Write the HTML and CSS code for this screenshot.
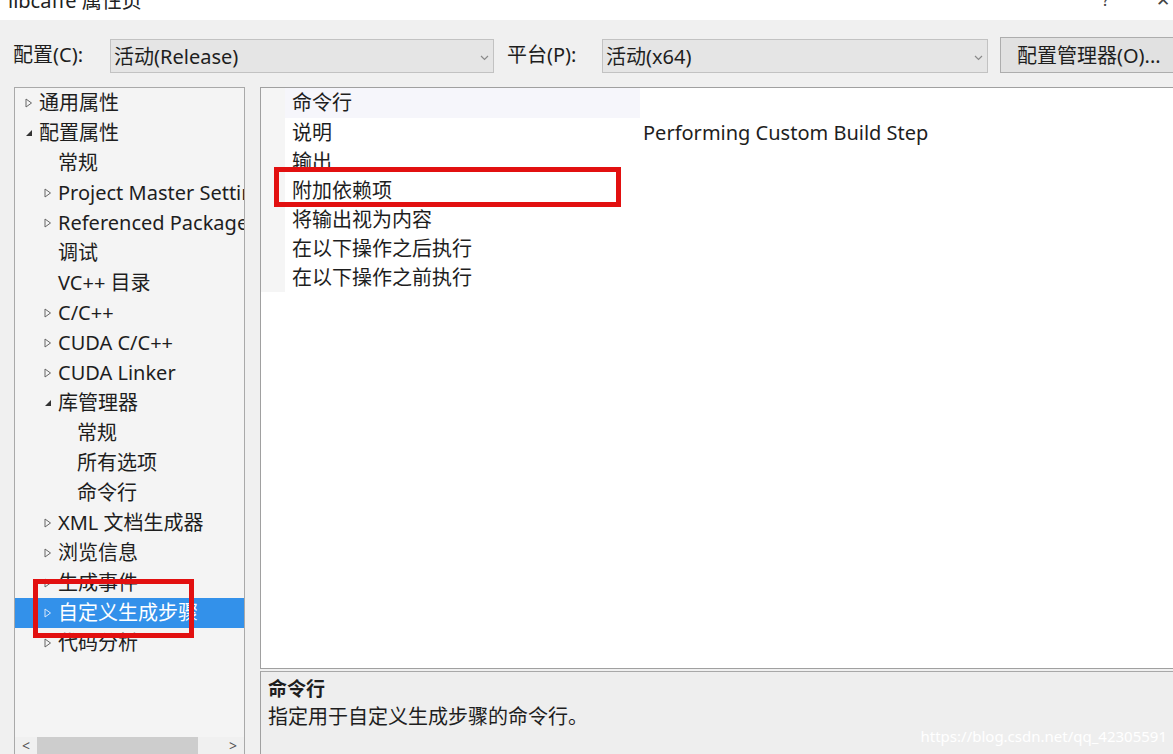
FILE: index.html
```html
<!DOCTYPE html>
<html lang="zh-CN">
<head>
    <meta charset="UTF-8">
    <title>libcaffe 属性页</title>
    <link rel="stylesheet" href="styles.css">
</head>
<body>

<div class="titlebar">
    <span class="title">libcaffe 属性页</span>
    <span class="help">?</span>
    <span class="close">✕</span>
</div>

<div class="toolbar">
    <span class="lbl lbl-config">配置(C):</span>
    <div class="combo combo-config">
        <span>活动(Release)</span>
        <svg class="chev" width="9" height="6" viewBox="0 0 9 6"><path d="M1 1 L4.5 4.5 L8 1" fill="none" stroke="#8a8a8a" stroke-width="1.2"/></svg>
    </div>
    <span class="lbl lbl-platform">平台(P):</span>
    <div class="combo combo-platform">
        <span>活动(x64)</span>
        <svg class="chev" width="9" height="6" viewBox="0 0 9 6"><path d="M1 1 L4.5 4.5 L8 1" fill="none" stroke="#8a8a8a" stroke-width="1.2"/></svg>
    </div>
    <button class="btn-manager">配置管理器(O)...</button>
</div>

<div class="main">
    <div class="tree">
        <div class="tree-items">
            <div class="node lv0"><span class="tw"><svg width="8" height="10" viewBox="0 0 8 10"><path d="M1 1 L6.5 5 L1 9 Z" fill="none" stroke="#666" stroke-width="1"/></svg></span>通用属性</div>
            <div class="node lv0"><span class="tw"><svg width="8" height="10" viewBox="0 0 8 10"><path d="M7 2 L7 8 L1 8 Z" fill="#333"/></svg></span>配置属性</div>
            <div class="node lv1"><span class="tw"></span>常规</div>
            <div class="node lv1"><span class="tw"><svg width="8" height="10" viewBox="0 0 8 10"><path d="M1 1 L6.5 5 L1 9 Z" fill="none" stroke="#666" stroke-width="1"/></svg></span>Project Master Settings</div>
            <div class="node lv1"><span class="tw"><svg width="8" height="10" viewBox="0 0 8 10"><path d="M1 1 L6.5 5 L1 9 Z" fill="none" stroke="#666" stroke-width="1"/></svg></span>Referenced Packages</div>
            <div class="node lv1"><span class="tw"></span>调试</div>
            <div class="node lv1"><span class="tw"></span>VC++ 目录</div>
            <div class="node lv1"><span class="tw"><svg width="8" height="10" viewBox="0 0 8 10"><path d="M1 1 L6.5 5 L1 9 Z" fill="none" stroke="#666" stroke-width="1"/></svg></span>C/C++</div>
            <div class="node lv1"><span class="tw"><svg width="8" height="10" viewBox="0 0 8 10"><path d="M1 1 L6.5 5 L1 9 Z" fill="none" stroke="#666" stroke-width="1"/></svg></span>CUDA C/C++</div>
            <div class="node lv1"><span class="tw"><svg width="8" height="10" viewBox="0 0 8 10"><path d="M1 1 L6.5 5 L1 9 Z" fill="none" stroke="#666" stroke-width="1"/></svg></span>CUDA Linker</div>
            <div class="node lv1"><span class="tw"><svg width="8" height="10" viewBox="0 0 8 10"><path d="M7 2 L7 8 L1 8 Z" fill="#333"/></svg></span>库管理器</div>
            <div class="node lv2"><span class="tw"></span>常规</div>
            <div class="node lv2"><span class="tw"></span>所有选项</div>
            <div class="node lv2"><span class="tw"></span>命令行</div>
            <div class="node lv1"><span class="tw"><svg width="8" height="10" viewBox="0 0 8 10"><path d="M1 1 L6.5 5 L1 9 Z" fill="none" stroke="#666" stroke-width="1"/></svg></span>XML 文档生成器</div>
            <div class="node lv1"><span class="tw"><svg width="8" height="10" viewBox="0 0 8 10"><path d="M1 1 L6.5 5 L1 9 Z" fill="none" stroke="#666" stroke-width="1"/></svg></span>浏览信息</div>
            <div class="node lv1"><span class="tw"><svg width="8" height="10" viewBox="0 0 8 10"><path d="M1 1 L6.5 5 L1 9 Z" fill="none" stroke="#666" stroke-width="1"/></svg></span>生成事件</div>
            <div class="node lv1 selected"><span class="tw"><svg width="8" height="10" viewBox="0 0 8 10"><path d="M1 1 L6.5 5 L1 9 Z" fill="none" stroke="#dbe9fb" stroke-width="1"/></svg></span>自定义生成步骤</div>
            <div class="node lv1"><span class="tw"><svg width="8" height="10" viewBox="0 0 8 10"><path d="M1 1 L6.5 5 L1 9 Z" fill="none" stroke="#666" stroke-width="1"/></svg></span>代码分析</div>
        </div>
        <div class="hscroll">
            <span class="arr">&lt;</span>
            <div class="track"><div class="thumb"></div></div>
            <span class="arr">&gt;</span>
        </div>
        <!-- красная рамка поверх дерева -->
        <div class="mark mark-tree"></div>
    </div>

    <div class="right">
        <div class="grid">
            <div class="prop current"><span class="gutter"></span><span class="name">命令行</span><span class="value"></span></div>
            <div class="prop"><span class="gutter"></span><span class="name">说明</span><span class="value">Performing Custom Build Step</span></div>
            <div class="prop"><span class="gutter"></span><span class="name">输出</span><span class="value"></span></div>
            <div class="prop"><span class="gutter"></span><span class="name">附加依赖项</span><span class="value"></span></div>
            <div class="prop"><span class="gutter"></span><span class="name">将输出视为内容</span><span class="value"></span></div>
            <div class="prop"><span class="gutter"></span><span class="name">在以下操作之后执行</span><span class="value"></span></div>
            <div class="prop"><span class="gutter"></span><span class="name">在以下操作之前执行</span><span class="value"></span></div>
            <div class="mark mark-grid"></div>
        </div>
        <div class="desc">
            <div class="desc-title">命令行</div>
            <div class="desc-text">指定用于自定义生成步骤的命令行。</div>
            <span class="watermark">https://blog.csdn.net/qq_42305591</span>
        </div>
    </div>
</div>

</body>
</html>
```

FILE: styles.css
```css
body {
    margin: 0;
    width: 1173px;
    height: 754px;
    overflow: hidden;
    background-color: #f0f0f0;
    color: #1e1e1e;
    font-family: "Noto Sans", "Noto Sans CJK SC", sans-serif;
    font-size: 20px;
}
.titlebar {
    height: 20px;
    background-color: #fff;
    position: relative;
    overflow: hidden;
}
.title {
    display: block;
    margin-top: -13px;
    padding-left: 8px;
    line-height: 28px;
    color: #222;
}
.help, .close {
    position: absolute;
    top: -12px;
    font-size: 17px;
    color: #444;
}
.help {
    left: 1102px;
}
.close {
    left: 1156px;
}
.toolbar {
    height: 67px;
    display: flex;
    align-items: center;
    padding-left: 13px;
    white-space: nowrap;
}
.toolbar > * {
    flex-shrink: 0;
}
.lbl-config {
    width: 97px;
}
.lbl-platform {
    margin-left: 13px;
    width: 95px;
}
.combo {
    height: 34px;
    margin-top: 5px;
    box-sizing: border-box;
    background-color: #e5e5e5;
    border: 1px solid #c2c2c2;
    display: flex;
    align-items: center;
    justify-content: space-between;
    padding: 0 4px 0 3px;
}
.combo-config {
    width: 384px;
}
.combo-platform {
    width: 386px;
}
.combo span {
    line-height: 32px;
    padding-top: 2px;
}
.chev {
    margin-top: 3px;
}
.btn-manager {
    margin-left: 12px;
    height: 36px;
    margin-top: 2px;
    width: 190px;
    text-align: left;
    padding: 0 0 0 16px;
    background-color: #e1e1e1;
    border: 1px solid #adadad;
    font-family: inherit;
    font-size: 20px;
    color: #1e1e1e;
}
.main {
    display: flex;
    height: 667px;
}
.tree {
    margin-left: 14px;
    width: 231px;
    box-sizing: border-box;
    border: 1px solid #a9a9a9;
    border-bottom: none;
    background-color: #f4f4f4;
    display: flex;
    flex-direction: column;
    position: relative;
}
.tree-items {
    flex: 1;
    overflow: hidden;
}
.node {
    height: 30px;
    line-height: 30px;
    display: flex;
    align-items: center;
    white-space: nowrap;
}
.node.lv0 {
    padding-left: 10px;
}
.node.lv1 {
    padding-left: 29px;
}
.node.lv2 {
    padding-left: 48px;
}
.tw {
    width: 14px;
    flex-shrink: 0;
    display: flex;
    align-items: center;
}
.node.selected {
    background-color: #3391ea;
    color: #fff;
}
.hscroll {
    height: 17px;
    display: flex;
    align-items: center;
    background-color: #f0f0f0;
    font-size: 14px;
    color: #555;
}
.arr {
    width: 22px;
    text-align: center;
}
.track {
    flex: 1;
    height: 17px;
}
.thumb {
    width: 161px;
    height: 17px;
    background-color: #cdcdcd;
}
.right {
    margin-left: 15px;
    flex: 1;
    display: flex;
    flex-direction: column;
}
.grid {
    flex: 1;
    background-color: #fff;
    border-top: 1px solid #a0a0a0;
    border-left: 1px solid #a0a0a0;
    border-bottom: 1px solid #a0a0a0;
    position: relative;
}
.prop {
    display: flex;
    height: 29px;
    line-height: 29px;
}
.prop:first-child {
    height: 30px;
    line-height: 30px;
}
.gutter {
    width: 24px;
    background-color: #f5f5f5;
}
.name {
    width: 348px;
    padding-left: 7px;
    white-space: nowrap;
}
.prop.current .name {
    background-color: #f6f6fb;
}
.value {
    padding-left: 3px;
    white-space: nowrap;
}
.desc {
    height: 83px;
    margin-top: 2px;
    box-sizing: border-box;
    border-top: 1px solid #a8a8a8;
    border-left: 1px solid #a0a0a0;
    background-color: #eeeeee;
    padding: 3px 0 0 7px;
    position: relative;
}
.desc-title {
    font-weight: bold;
    font-size: 19px;
    line-height: 28px;
}
.desc-text {
    line-height: 28px;
}
.watermark {
    position: absolute;
    right: 6px;
    bottom: 8px;
    font-size: 15px;
    color: #ffffff;
}
.mark {
    position: absolute;
    border: 5px solid #e21010;
    box-sizing: border-box;
    pointer-events: none;
}
.mark-tree {
    left: 18px;
    top: 491px;
    width: 161px;
    height: 59px;
}
.mark-grid {
    left: 13px;
    top: 79px;
    width: 347px;
    height: 40px;
}
```
